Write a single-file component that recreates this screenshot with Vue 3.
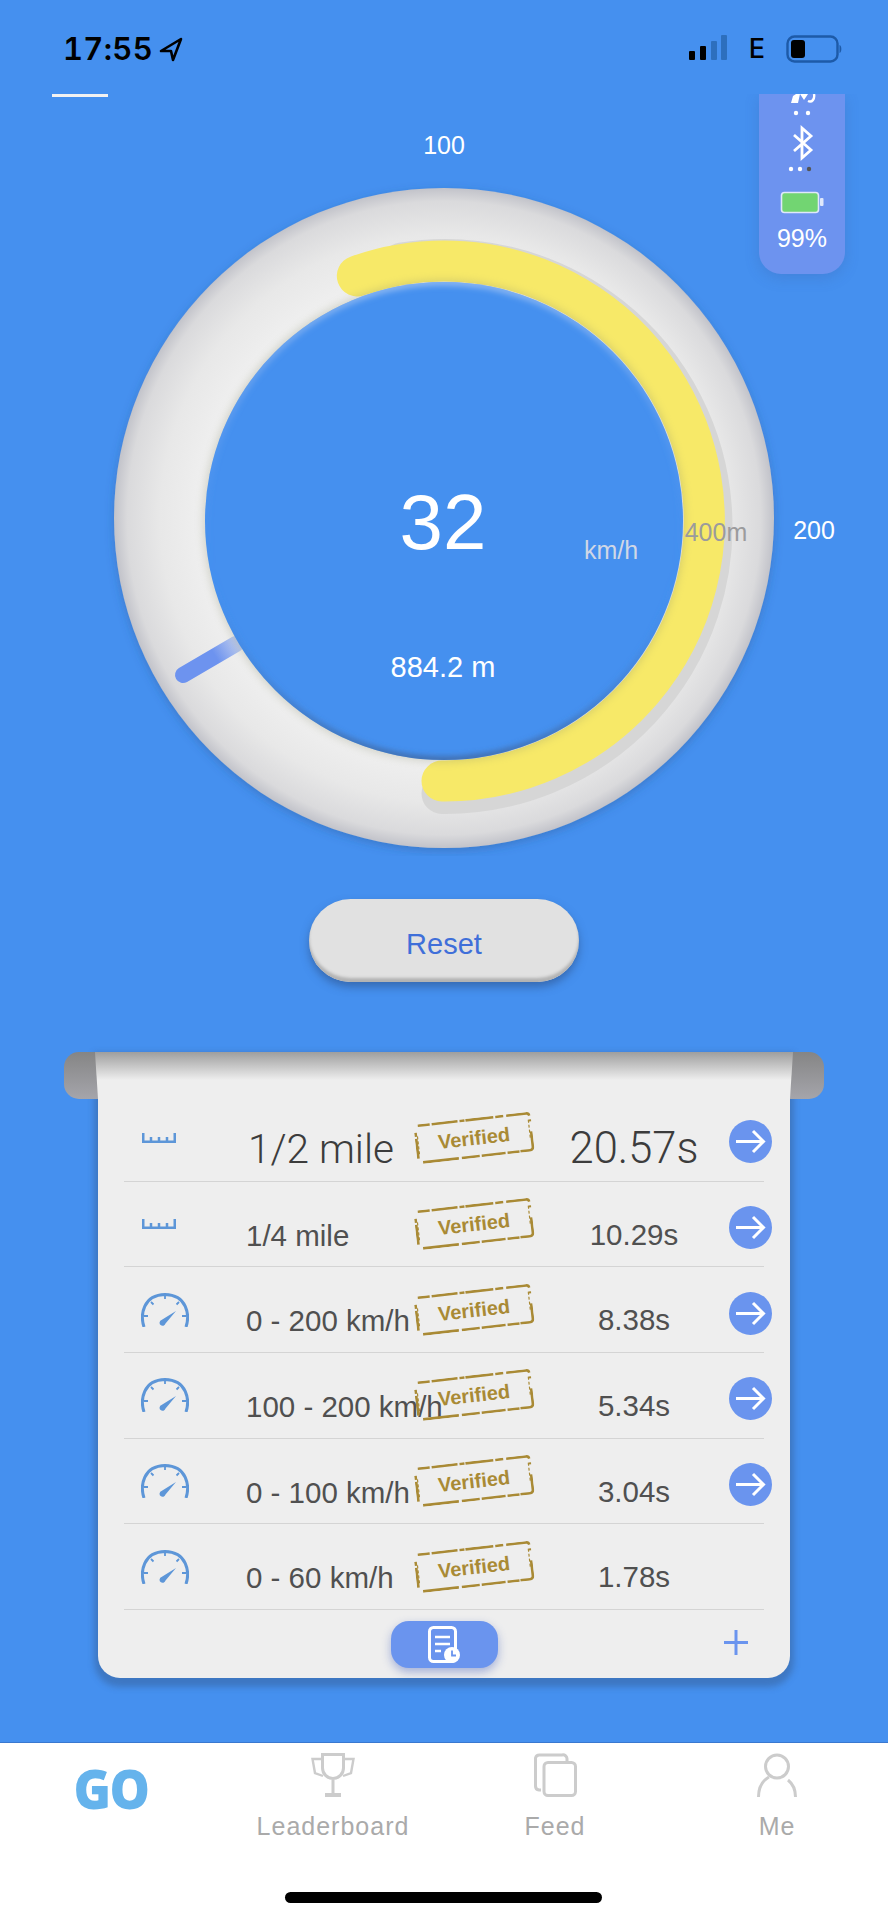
<script setup>
const rows = [
  { icon: 'ruler', label: '1/2 mile', time: '20.57s', arrow: true, big: true },
  { icon: 'ruler', label: '1/4 mile', time: '10.29s', arrow: true },
  { icon: 'gauge', label: '0 - 200 km/h', time: '8.38s', arrow: true },
  { icon: 'gauge', label: '100 - 200 km/h', time: '5.34s', arrow: true },
  { icon: 'gauge', label: '0 - 100 km/h', time: '3.04s', arrow: true },
  { icon: 'gauge', label: '0 - 60 km/h', time: '1.78s', arrow: false },
]
</script>

<template>
  <div class="page">
    <header class="status">
      <div class="clock">
        <span class="time-now">17:55</span>
        <svg class="loc" width="24" height="25" viewBox="0 0 24 25"><path d="M22 2 L2 14 H12 L14 23 Z" fill="none" stroke="#000" stroke-width="2.6" stroke-linejoin="round"/></svg>
      </div>
      <div class="status-right">
        <svg width="40" height="26" viewBox="0 0 40 26">
          <rect x="1" y="16" width="6" height="9" rx="1" fill="#000"/>
          <rect x="12" y="11" width="6" height="14" rx="1" fill="#000"/>
          <rect x="23" y="6" width="6" height="19" rx="1" fill="#2d6fbd"/>
          <rect x="33" y="0" width="6" height="25" rx="1" fill="#2d6fbd"/>
        </svg>
        <span class="net">E</span>
        <svg width="56" height="28" viewBox="0 0 56 28">
          <rect x="1.500" y="1.500" width="50" height="25" rx="7" fill="none" stroke="#1d5aa8" stroke-width="2.400"/>
          <rect x="5" y="5" width="14" height="18" rx="3" fill="#000"/>
          <path d="M53.500 10 C56 11 56 17 53.500 18 Z" fill="#1d5aa8"/>
        </svg>
      </div>
    </header>

    <main class="main">
      <aside class="panel">
        <svg width="86" height="130" viewBox="759 94 86 130">
          <path d="M791 103 L793 96 L796 94 H800 L798 103 Z M800 94 H808 L804 100 Z" fill="#fff"/>
          <path d="M808 101 C812 103 815 99 814 94" fill="none" stroke="#fff" stroke-width="2.4"/>
          <circle cx="796" cy="113" r="2.2" fill="#fff"/>
          <circle cx="808" cy="113" r="2.2" fill="#fff"/>
          <path d="M794 135 L811 150 L802 158 V128 L811 136 L794 151" fill="none" stroke="#fff" stroke-width="2.8"/>
          <circle cx="791" cy="169" r="2.2" fill="#fff"/>
          <circle cx="800" cy="169" r="2.2" fill="#fff"/>
          <circle cx="809" cy="169" r="2.2" fill="#555"/>
          <rect x="781.5" y="192.500" width="37" height="20" rx="3" fill="#72d572" stroke="#dfe8fb" stroke-width="1.6"/>
          <rect x="820" y="198" width="3.500" height="8" rx="1" fill="#dfe8fb"/>
        </svg>
        <span class="pct">99%</span>
      </aside>

      <svg class="dial" width="888" height="762" viewBox="0 94 888 762">
        <defs>
          <radialGradient id="ringFill" gradientUnits="userSpaceOnUse" cx="444" cy="518" r="330">
            <stop offset="0.72" stop-color="#f0f0f0"/>
            <stop offset="0.86" stop-color="#e8e8e8"/>
            <stop offset="0.96" stop-color="#dadadc"/>
            <stop offset="1" stop-color="#c2c3ca"/>
          </radialGradient>
          <linearGradient id="innerEdge" x1="0" y1="0" x2="0" y2="1">
            <stop offset="0" stop-color="#a9c8f4"/>
            <stop offset="0.3" stop-color="#78a8ee" stop-opacity="0.5"/>
            <stop offset="0.6" stop-color="#4590ef" stop-opacity="0"/>
            <stop offset="1" stop-color="#3f5f90"/>
          </linearGradient>
          <linearGradient id="needleFill" gradientUnits="userSpaceOnUse" x1="180" y1="679" x2="240" y2="643">
            <stop offset="0.6" stop-color="#6d93ef"/>
            <stop offset="1" stop-color="#6d93ef" stop-opacity="0.35"/>
          </linearGradient>
          <filter id="ringShadow" x="-10%" y="-10%" width="120%" height="120%">
            <feDropShadow dx="0" dy="3" stdDeviation="5" flood-color="#2d4f86" flood-opacity="0.35"/>
          </filter>
          <filter id="soft" x="-10%" y="-10%" width="120%" height="120%">
            <feGaussianBlur stdDeviation="3"/>
          </filter>
          <filter id="glow" x="-10%" y="-10%" width="120%" height="120%">
            <feGaussianBlur stdDeviation="4"/>
          </filter>
          <clipPath id="innerClip"><circle cx="444" cy="521" r="239"/></clipPath>
        </defs>

        <rect x="52" y="94" width="56" height="3" fill="#f2f2f2"/>
        <circle cx="444" cy="518" r="330" fill="url(#ringFill)" filter="url(#ringShadow)"/>
        <path d="M402 263 A267 267 0 1 1 442 793.500" fill="none" stroke="#d6d6d6" stroke-width="41" stroke-linecap="round"/>
        <path d="M357.300 276 A260 260 0 1 1 442 781" fill="none" stroke="#f7e968" stroke-width="41" stroke-linecap="round"/>
        <path d="M183 675 L236 644" fill="none" stroke="url(#needleFill)" stroke-width="16" stroke-linecap="round"/>
        <circle cx="444" cy="521" r="241" fill="#8a8f70" opacity="0.3" filter="url(#glow)"/>
        <circle cx="444" cy="521" r="239" fill="#4590ef"/>
        <g clip-path="url(#innerClip)">
          <circle cx="444" cy="521" r="239" fill="none" stroke="url(#innerEdge)" stroke-width="5" filter="url(#soft)"/>
        </g>

        <text x="444" y="154" class="t mark">100</text>
        <text x="814" y="539" class="t mark">200</text>
        <text x="716" y="541" class="t dist">400m</text>
        <text x="443" y="549" class="t speed">32</text>
        <text x="611" y="559" class="t unit">km/h</text>
        <text x="443" y="677" class="t odo">884.2 m</text>
      </svg>

      <div class="reset"><span class="reset-text">Reset</span></div>

      <section class="sheet">
        <div class="roll roll-left"></div>
        <div class="roll roll-right"></div>
        <div class="curl"></div>

        <div v-for="r in rows" :key="r.label" class="row" :class="{ big: r.big }">
          <svg v-if="r.icon === 'ruler'" class="ruler" width="34" height="10" viewBox="0 0 34 10">
            <path d="M1.250 0 V8.750 H32.750 V0 M9 4 V9 M17 4 V9 M25 4 V9" fill="none" stroke="#5d96d8" stroke-width="2.500"/>
          </svg>
          <svg v-else class="gauge" width="48" height="34" viewBox="0 0 48 34">
            <path d="M3 34 C-1 22 2 2 24 1.600 C46 2 49 22 45 34" fill="none" stroke="#5d96d8" stroke-width="3"/>
            <path d="M3 23 H7 M45 23 H41 M10 9 L12.500 11.500 M38 9 L35.500 11.500 M24 2 V6" fill="none" stroke="#5d96d8" stroke-width="1.800"/>
            <path d="M35 18 L24.500 30.500 A3 3 0 1 1 20.500 27 Z" fill="#5d96d8"/>
          </svg>

          <span class="label">{{ r.label }}</span>

          <div class="stamp">
            <svg class="stamp-edge" width="118" height="40" viewBox="0 0 118 40">
              <rect x="1.500" y="1.500" width="115" height="37" rx="3" fill="none" stroke="#a98a35" stroke-width="2.600" stroke-dasharray="12 2 26 2 5 1 28 2 8 3 24 4 2 10 30 1 12 2 24 2 18 3 36 7 20 2 4"/>
              <path d="M3 30 V12 M115 8 V26" fill="none" stroke="#a98a35" stroke-width="1.200" stroke-dasharray="3 2"/>
            </svg>
            <span class="stamp-text">Verified</span>
          </div>

          <span class="time">{{ r.time }}</span>

          <svg v-if="r.arrow" class="go" width="43" height="43" viewBox="0 0 43 43">
            <circle cx="21.500" cy="21.500" r="21.500" fill="#6a94ee"/>
            <path d="M7 21.500 H34 M24 11 L34.500 21.500 L24 32" fill="none" stroke="#fff" stroke-width="3"/>
          </svg>
        </div>

        <div class="sheet-foot">
          <div class="history">
            <svg width="34" height="38" viewBox="0 0 34 38">
              <rect x="2.500" y="1.500" width="26" height="34" rx="4" fill="none" stroke="#fff" stroke-width="3"/>
              <path d="M8 11 H23 M8 18 H23 M8 25 H14" fill="none" stroke="#fff" stroke-width="2.600"/>
              <circle cx="25" cy="29" r="8" fill="#fff"/>
              <path d="M25 24.500 V29.500 H29" fill="none" stroke="#6a94ee" stroke-width="1.800"/>
            </svg>
          </div>
          <svg class="plus" width="24" height="25" viewBox="0 0 24 25">
            <path d="M12 0 V25 M0 12.500 H24" fill="none" stroke="#6a94ee" stroke-width="3"/>
          </svg>
        </div>
      </section>
    </main>

    <nav class="tabs">
      <div class="tab"><span class="go-tab">GO</span></div>
      <div class="tab">
        <svg width="44" height="44" viewBox="0 0 44 44" class="tab-icon">
          <path d="M11.500 1.500 H32.500 V15 A10.500 10.500 0 0 1 11.500 15 Z M22 26 V41" fill="none" stroke="#ccc" stroke-width="3"/>
          <path d="M14 42 H30" fill="none" stroke="#ccc" stroke-width="4"/>
          <path d="M11 6 H1.500 L4 20 L12 23 M33 6 H42.500 L40 20 L32 23" fill="none" stroke="#ccc" stroke-width="2.400"/>
        </svg>
        <span class="tab-label">Leaderboard</span>
      </div>
      <div class="tab">
        <svg width="43" height="44" viewBox="0 0 43 44" class="tab-icon">
          <path d="M7 37 H5 A4 4 0 0 1 1.500 33 V5 A4 4 0 0 1 5.500 2 H28 A4 4 0 0 1 33 6 V9" fill="none" stroke="#ccc" stroke-width="3"/>
          <rect x="10" y="9.500" width="31.500" height="33" rx="4" fill="none" stroke="#ccc" stroke-width="3"/>
        </svg>
        <span class="tab-label">Feed</span>
      </div>
      <div class="tab">
        <svg width="40" height="44" viewBox="0 0 40 44" class="tab-icon">
          <circle cx="20" cy="13.500" r="11.500" fill="none" stroke="#ccc" stroke-width="3"/>
          <path d="M1.500 44 C1.500 35 5 28 12 24 M31 27 C36 31 38.500 37 38.500 44" fill="none" stroke="#ccc" stroke-width="3"/>
        </svg>
        <span class="tab-label">Me</span>
      </div>
      <div class="home-bar"></div>
    </nav>
  </div>
</template>

<style>
html, body { margin: 0; background: #4590ef; }
</style>

<style scoped>
.page {
  width: 888px;
  height: 1920px;
  display: flex;
  flex-direction: column;
  background: #4590ef;
  font-family: "Liberation Sans", Arial, sans-serif;
  overflow: hidden;
}
.status {
  height: 94px;
  flex: none;
  display: flex;
  justify-content: space-between;
  align-items: flex-start;
  padding: 33px 46px 0 63px;
  box-sizing: border-box;
}
.clock { display: flex; align-items: center; gap: 6px; }
.time-now {
  font-family: Inter, "Liberation Sans", sans-serif;
  font-weight: 600;
  font-size: 31px;
  line-height: 32px;
  color: #000;
  font-feature-settings: "tnum";
  letter-spacing: 0.3px;
}
.status-right { display: flex; align-items: flex-start; gap: 21px; margin-top: 2px; }
.status-right svg:first-child { margin-left: -4px; }
.net {
  font-family: Inter, "Liberation Sans", sans-serif;
  font-weight: 500;
  font-size: 27px;
  line-height: 28px;
  color: #000;
}
.main {
  position: relative;
  flex: 1;
  display: flex;
  flex-direction: column;
  align-items: center;
  overflow: hidden;
}
.panel {
  position: absolute;
  top: 0;
  left: 759px;
  width: 86px;
  height: 180px;
  background: #6d93ef;
  border-radius: 0 0 22px 22px;
  box-shadow: 0 4px 14px rgba(60, 90, 160, 0.25);
  display: flex;
  flex-direction: column;
  align-items: center;
}
.pct { color: #fff; font-size: 25px; line-height: 28px; }
.dial { display: block; flex: none; }
.t { text-anchor: middle; font-family: "Liberation Sans", Arial, sans-serif; }
.mark { fill: #fff; font-size: 25px; }
.dist { fill: #9b9b9d; font-size: 25px; }
.speed { fill: #fff; font-size: 78px; }
.unit { fill: #cfd7e6; font-size: 25px; }
.odo { fill: #fff; font-size: 29px; }
.reset {
  flex: none;
  width: 270px;
  height: 83px;
  margin-top: 43px;
  display: flex;
  align-items: center;
  justify-content: center;
  border-radius: 42px;
  background: #e1e1e1;
  color: #3f6fd9;
  font-size: 29px;
  box-shadow: inset 0 -4px 3px #b3b3b3, 0 5px 8px rgba(40, 70, 120, 0.5);
}
.reset-text { margin-top: 8px; }
.sheet {
  position: relative;
  flex: none;
  width: 692px;
  height: 626px;
  margin-top: 70px;
  padding: 44px 26px 0;
  box-sizing: border-box;
  background: #eee;
  border-radius: 0 0 22px 22px;
  box-shadow: 0 5px 6px 4px rgba(50, 80, 120, 0.38);
}
.roll {
  position: absolute;
  top: 0;
  width: 40px;
  height: 47px;
  background: linear-gradient(#858585, #a5a5ab);
}
.roll-left { left: -34px; border-radius: 15px 0 0 15px; }
.roll-right { right: -34px; border-radius: 0 15px 15px 0; }
.curl {
  position: absolute;
  top: 0;
  left: -3px;
  right: -3px;
  height: 47px;
  background: linear-gradient(#9e9e9e, #eee 28px);
  clip-path: polygon(0 0, 100% 0, calc(100% - 3px) 100%, 3px 100%);
}
.row {
  position: relative;
  height: 85.7px;
  box-sizing: border-box;
  display: grid;
  grid-template-columns: 122px 169px 118px 202px 29px;
  align-items: center;
  border-bottom: 1px solid #d4d4d4;
  color: #505050;
  font-size: 29.5px;
}
.ruler { margin-left: 18px; }
.gauge { margin-left: 17px; }
.label { white-space: nowrap; margin-top: 23px; }
.time { text-align: center; margin-top: 21px; }
.big .label, .big .time {
  font-family: Roboto, "Liberation Sans", sans-serif;
  font-weight: 300;
  color: #3c3c3c;
  margin-top: 20px;
}
.big .label { margin-left: 2px; font-size: 40.5px; margin-top: 22px; }
.big .time { font-size: 43.5px; }
.stamp {
  position: relative;
  width: 118px;
  height: 40px;
  display: flex;
  align-items: center;
  justify-content: center;
  transform: rotate(-6.500deg);
}
.stamp-edge { position: absolute; inset: 0; }
.stamp-text { color: #a98a35; font-weight: 700; font-size: 20px; }
.go { margin-left: -6px; margin-top: 7px; }
.sheet-foot {
  position: relative;
  height: 67px;
  display: flex;
  justify-content: center;
  align-items: flex-start;
}
.history {
  width: 107px;
  height: 47px;
  margin-top: 11px;
  border-radius: 18px;
  background: #6a94ee;
  box-shadow: 0 4px 10px rgba(70, 100, 190, 0.45);
  display: flex;
  align-items: center;
  justify-content: center;
}
.plus { position: absolute; left: 600px; top: 20px; }
.tabs {
  position: relative;
  flex: none;
  height: 178px;
  box-sizing: border-box;
  background: #fff;
  border-top: 1px solid #3a78d0;
  display: grid;
  grid-template-columns: repeat(4, 222px);
  align-items: start;
}
.tab {
  display: flex;
  flex-direction: column;
  align-items: center;
  padding-top: 10px;
}
.tab-icon { display: block; }
.go-tab {
  font-family: "Open Sans", sans-serif;
  font-weight: 800;
  font-size: 54px;
  line-height: 60px;
  margin-top: 5px;
  color: #65b3ec;
  letter-spacing: -1.5px;
  transform: scaleX(0.94);
}
.tab-label {
  margin-top: 14px;
  color: #aaa;
  font-size: 25px;
  line-height: 30px;
  letter-spacing: 1px;
}
.home-bar {
  position: absolute;
  left: 285px;
  top: 149px;
  width: 317px;
  height: 11px;
  border-radius: 6px;
  background: #000;
}
</style>
